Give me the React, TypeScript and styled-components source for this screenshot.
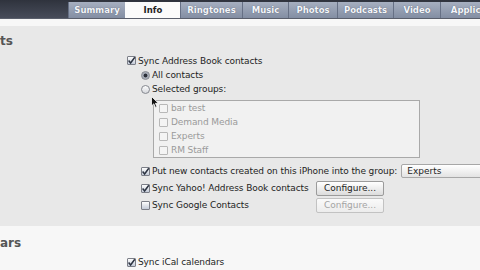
import React from "react"
import styled, { createGlobalStyle } from "styled-components"

const GlobalStyle = createGlobalStyle`
    html, body {
        margin: 0;
        padding: 0;
        overflow: hidden;
        background: #f6f6f6;
    }
    body {
        font-family: "DejaVu Sans", "Liberation Sans", sans-serif;
        width: 480px;
        height: 270px;
    }
`

const tabs = [
    { label: "Summary", width: 57 },
    { label: "Info", width: 55, active: true },
    { label: "Ringtones", width: 62 },
    { label: "Music", width: 46 },
    { label: "Photos", width: 49 },
    { label: "Podcasts", width: 56 },
    { label: "Video", width: 47 },
    { label: "Applications", width: 80 },
]

const groups = ["bar test", "Demand Media", "Experts", "RM Staff"]

const CheckBox = ({ checked, disabled }: { checked?: boolean; disabled?: boolean }) => (
    <Box $disabled={disabled}>
        {checked && (
            <svg width="9" height="9" viewBox="0 0 9 9">
                <path d="M1.6 4.6 L3.6 7 L7.8 1.2" fill="none" stroke="#2d3442" strokeWidth="1.5" />
            </svg>
        )}
    </Box>
)

const Radio = ({ selected }: { selected?: boolean }) => <RadioDot $selected={selected} />

export default function App() {
    return (
        <Page>
            <GlobalStyle />
            <TopBar>
                <TabStrip>
                    {tabs.map((t) => (
                        <Tab key={t.label} $active={t.active} $w={t.width}>
                            {t.label}
                        </Tab>
                    ))}
                </TabStrip>
            </TopBar>
            <Strip />
            <Section $gray>
                <Heading>ts</Heading>
                <Options>
                    <Row $h={15}>
                        <CheckBox checked />
                        <Label>Sync Address Book contacts</Label>
                    </Row>
                    <Indent>
                        <Row $h={14}>
                            <Radio selected />
                            <Label>All contacts</Label>
                        </Row>
                        <Row $h={14}>
                            <Radio />
                            <Label>Selected groups:</Label>
                        </Row>
                        <GroupList>
                            {groups.map((g) => (
                                <GroupItem key={g}>
                                    <CheckBox disabled />
                                    <Label $muted>{g}</Label>
                                </GroupItem>
                            ))}
                            <Cursor width="8" height="12" viewBox="0 0 8 12">
                                <path d="M0.5 0.5 L0.5 10 L2.8 7.8 L4.4 11.4 L5.9 10.7 L4.4 7.3 L7.4 7.3 Z" fill="#111" stroke="#fff" strokeWidth="0.8" />
                            </Cursor>
                        </GroupList>
                        <Row $h={14} $top={6}>
                            <CheckBox checked />
                            <Label>Put new contacts created on this iPhone into the group:</Label>
                            <Select>Experts</Select>
                        </Row>
                        <Row $h={16} $top={2}>
                            <LabelCell>
                                <CheckBox checked />
                                <Label>Sync Yahoo! Address Book contacts</Label>
                            </LabelCell>
                            <Button>Configure...</Button>
                        </Row>
                        <Row $h={16} $top={1}>
                            <LabelCell>
                                <CheckBox />
                                <Label>Sync Google Contacts</Label>
                            </LabelCell>
                            <Button disabled>Configure...</Button>
                        </Row>
                    </Indent>
                </Options>
            </Section>
            <Section>
                <Heading $top={10}>ars</Heading>
                <Options $top={29}>
                    <Row $h={14}>
                        <CheckBox checked />
                        <Label>Sync iCal calendars</Label>
                    </Row>
                </Options>
            </Section>
        </Page>
    )
}

const Page = styled.div`
    width: 480px;
    height: 270px;
    display: flex;
    flex-direction: column;
    overflow: hidden;
    color: #1e1e1e;
    font-size: 9px;
`

const TopBar = styled.div`
    height: 19px;
    flex-shrink: 0;
    background: linear-gradient(#2f333d, #474c5a);
    display: flex;
    align-items: flex-end;
    padding-left: 68px;
    border-bottom: 1px solid #5a5f6c;
    box-sizing: border-box;
`

const TabStrip = styled.div`
    display: flex;
    height: 16px;
`

const Tab = styled.div<{ $active?: boolean; $w: number }>`
    width: ${(p) => p.$w}px;
    flex-shrink: 0;
    box-sizing: border-box;
    display: flex;
    align-items: center;
    justify-content: center;
    font-size: 8.5px;
    font-weight: bold;
    color: ${(p) => (p.$active ? "#1f1f1f" : "#f4f6fa")};
    text-shadow: ${(p) => (p.$active ? "none" : "0 0 1px #4a5266")};
    background: ${(p) => (p.$active ? "#fbfbfb" : "linear-gradient(#a6afc0, #838ea3)")};
    border-left: 1px solid ${(p) => (p.$active ? "#fbfbfb" : "#667085")};
    white-space: nowrap;
    overflow: hidden;
`

const Strip = styled.div`
    height: 7px;
    flex-shrink: 0;
    background: #f7f7f7;
`

const Section = styled.div<{ $gray?: boolean }>`
    flex: ${(p) => (p.$gray ? "0 0 200px" : "1")};
    background: ${(p) => (p.$gray ? "#e8e8e8" : "#f7f7f7")};
    display: flex;
    align-items: flex-start;
`

const Heading = styled.div<{ $top?: number }>`
    width: 127px;
    flex-shrink: 0;
    margin-top: ${(p) => p.$top ?? 8}px;
    font-size: 12px;
    font-weight: bold;
    color: #555;
    line-height: 14px;
`

const Options = styled.div<{ $top?: number }>`
    padding-top: ${(p) => p.$top ?? 27}px;
    display: flex;
    flex-direction: column;
`

const Indent = styled.div`
    padding-left: 14px;
    display: flex;
    flex-direction: column;
`

const Row = styled.div<{ $h: number; $top?: number }>`
    height: ${(p) => p.$h}px;
    margin-top: ${(p) => p.$top ?? 0}px;
    display: flex;
    align-items: center;
    white-space: nowrap;
`

const LabelCell = styled.div`
    width: 175px;
    display: flex;
    align-items: center;
`

const Label = styled.span<{ $muted?: boolean }>`
    margin-left: 2px;
    color: ${(p) => (p.$muted ? "#9a9a9a" : "#1e1e1e")};
    letter-spacing: -0.1px;
`

const Box = styled.span<{ $disabled?: boolean }>`
    width: 9px;
    height: 9px;
    box-sizing: border-box;
    flex-shrink: 0;
    border: 1px solid ${(p) => (p.$disabled ? "#b8b8b8" : "#7c7f88")};
    border-radius: 1px;
    background: ${(p) => (p.$disabled ? "#f4f4f4" : "linear-gradient(#fdfdfd, #c4cbd8)")};
    display: flex;
    align-items: center;
    justify-content: center;

    svg {
        margin: -1px;
    }
`

const RadioDot = styled.span<{ $selected?: boolean }>`
    width: 9px;
    height: 9px;
    box-sizing: border-box;
    flex-shrink: 0;
    border-radius: 50%;
    border: 1px solid #85888f;
    background: ${(p) =>
        p.$selected
            ? "radial-gradient(circle, #2b2f38 0 1.6px, #9aa0ab 2.2px, #c9ccd3 100%)"
            : "linear-gradient(#fdfdfd, #d5d7dc)"};
`

const GroupList = styled.div`
    margin: 4px 0 0 12px;
    width: 267px;
    height: 58px;
    box-sizing: border-box;
    border: 1px solid #a9a9a9;
    background: #f1f1f1;
    padding: 0 4px;
    display: flex;
    flex-direction: column;
    position: relative;
`

const GroupItem = styled.div`
    height: 14.5px;
    display: flex;
    align-items: center;
    padding-left: 1px;
    gap: 1px;
`

const Cursor = styled.svg`
    position: absolute;
    left: -3px;
    top: -5px;
`

const Select = styled.div`
    margin-left: 4px;
    width: 90px;
    height: 14px;
    flex-shrink: 0;
    box-sizing: border-box;
    border: 1px solid #a7a7a7;
    border-radius: 2px;
    background: linear-gradient(#ffffff, #e3e3e3);
    padding-left: 5px;
    display: flex;
    align-items: center;
`

const Button = styled.div<{ disabled?: boolean }>`
    width: 68px;
    height: 15px;
    box-sizing: border-box;
    border: 1px solid ${(p) => (p.disabled ? "#c2c2c2" : "#9b9b9b")};
    border-radius: 2px;
    background: ${(p) => (p.disabled ? "linear-gradient(#fafafa, #ececec)" : "linear-gradient(#ffffff, #dcdcdc)")};
    color: ${(p) => (p.disabled ? "#a4a4a4" : "#1e1e1e")};
    display: flex;
    align-items: center;
    justify-content: center;
`
